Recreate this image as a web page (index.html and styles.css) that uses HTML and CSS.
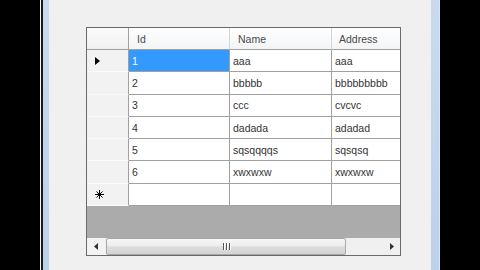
FILE: index.html
```html
<!DOCTYPE html>
<html lang="en">
<head>
  <meta charset="UTF-8" />
  <title>Form1</title>
  <link rel="stylesheet" href="styles.css">
</head>
<body>
  <div class="window">
    <div class="frame">
      <div class="client">
        <div class="grid-view">
          <div class="cells">
            <div class="corner"></div>
            <div class="col-head">Id</div>
            <div class="col-head">Name</div>
            <div class="col-head last">Address</div>

            <div class="row-head">
              <svg width="5" height="8" viewBox="0 0 5 8"><polygon points="0,0 5,4 0,8" fill="#000"/></svg>
            </div>
            <div class="cell selected">1</div>
            <div class="cell">aaa</div>
            <div class="cell last">aaa</div>

            <div class="row-head"></div>
            <div class="cell">2</div>
            <div class="cell">bbbbb</div>
            <div class="cell last">bbbbbbbbb</div>

            <div class="row-head"></div>
            <div class="cell">3</div>
            <div class="cell">ccc</div>
            <div class="cell last">cvcvc</div>

            <div class="row-head"></div>
            <div class="cell">4</div>
            <div class="cell">dadada</div>
            <div class="cell last">adadad</div>

            <div class="row-head"></div>
            <div class="cell">5</div>
            <div class="cell">sqsqqqqs</div>
            <div class="cell last">sqsqsq</div>

            <div class="row-head"></div>
            <div class="cell">6</div>
            <div class="cell">xwxwxw</div>
            <div class="cell last">xwxwxw</div>

            <div class="row-head">
              <svg width="9" height="9" viewBox="0 0 9 9">
                <g stroke="#000" stroke-width="1">
                  <line x1="4.5" y1="0" x2="4.5" y2="9"/>
                  <line x1="0" y1="4.5" x2="9" y2="4.5"/>
                  <line x1="1.5" y1="1.5" x2="7.5" y2="7.5"/>
                  <line x1="7.5" y1="1.5" x2="1.5" y2="7.5"/>
                </g>
              </svg>
            </div>
            <div class="cell"></div>
            <div class="cell"></div>
            <div class="cell last"></div>
          </div>

          <div class="workspace"></div>

          <div class="hscroll">
            <div class="sb-btn left">
              <svg width="4" height="7" viewBox="0 0 4 7"><polygon points="4,0 0,3.5 4,7" fill="#333"/></svg>
            </div>
            <div class="sb-thumb">
              <div class="grip"><span></span><span></span><span></span></div>
            </div>
            <div class="sb-track"></div>
            <div class="sb-btn right">
              <svg width="4" height="7" viewBox="0 0 4 7"><polygon points="0,0 4,3.5 0,7" fill="#333"/></svg>
            </div>
          </div>
        </div>
      </div>
    </div>
  </div>
</body>
</html>
```

FILE: styles.css
```css
body {
  margin: 0;
  background: #000;
  font-family: 'Liberation Sans', Arial, sans-serif;
  font-size: 10.5px;
}
.window {
  width: 400px;
  height: 270px;
  margin-left: 40px;
  box-sizing: border-box;
  border-left: 1px solid #f4f4f4;
  border-right: 1px solid #d8e4f0;
  display: flex;
}
.frame {
  flex: 1;
  display: flex;
  border-left: 2px solid #1a1a1a;
  padding: 0 8px 0 6px;
  background: linear-gradient(to bottom, #c9daee, #bcd1ea);
}
.client {
  flex: 1;
  background: #f0f0f0;
  padding: 27px 0 0 37px;
}

/* data grid */
.grid-view {
  width: 315px;
  height: 229px;
  box-sizing: border-box;
  border: 1px solid #6a6a6a;
  display: flex;
  flex-direction: column;
  overflow: hidden;
}
.cells {
  display: grid;
  grid-template-columns: 42px 101px 102px 68px;
  grid-template-rows: 22px repeat(7, 22.3px);
}
.cells > div {
  box-sizing: border-box;
  display: flex;
  align-items: center;
  white-space: nowrap;
  overflow: hidden;
}
.corner {
  background: linear-gradient(to bottom, #fbfbfb, #f0f0f0);
  border-right: 1px solid #a0a0a0;
  border-bottom: 1px solid #a0a0a0;
}
.col-head {
  padding-left: 8px;
  color: #4a4a4a;
  background: linear-gradient(to bottom, #ffffff, #f3f4f6);
  border-right: 1px solid #d4d4d4;
  border-bottom: 1px solid #a0a0a0;
}
.col-head.last {
  padding-left: 7px;
  border-right: none;
}
.row-head {
  padding-left: 8px;
  background: #f2f2f2;
  border-right: 1px solid #a0a0a0;
  border-bottom: 1px solid #fafafa;
}
.cell {
  padding-left: 3px;
  color: #333;
  background: #fff;
  border-right: 1px solid #a0a0a0;
  border-bottom: 1px solid #a0a0a0;
}
.cell.last {
  border-right: none;
}
.cell.selected {
  background: #3399ff;
  color: #fff;
}
.workspace {
  flex: 1;
  background: #ababab;
}

/* horizontal scroll bar */
.hscroll {
  height: 17px;
  display: flex;
  background: #f0f0f0;
}
.sb-btn {
  width: 18px;
  display: flex;
  align-items: center;
  justify-content: center;
  background: #f3f3f3;
}
.sb-btn.right {
  width: 17px;
  background: #f0f0f0;
}
.sb-thumb {
  width: 240px;
  margin: 0 1px;
  box-sizing: border-box;
  border: 1px solid #a7a7a7;
  border-radius: 2px;
  background: linear-gradient(to bottom, #f7f7f7, #ececec 45%, #dcdcdc 55%, #d4d4d4);
  display: flex;
  align-items: center;
  justify-content: center;
}
.sb-track {
  flex: 1;
}
.grip {
  display: flex;
  gap: 2px;
}
.grip span {
  width: 1px;
  height: 7px;
  background: #555;
  box-shadow: 1px 0 0 #fff;
}
```
